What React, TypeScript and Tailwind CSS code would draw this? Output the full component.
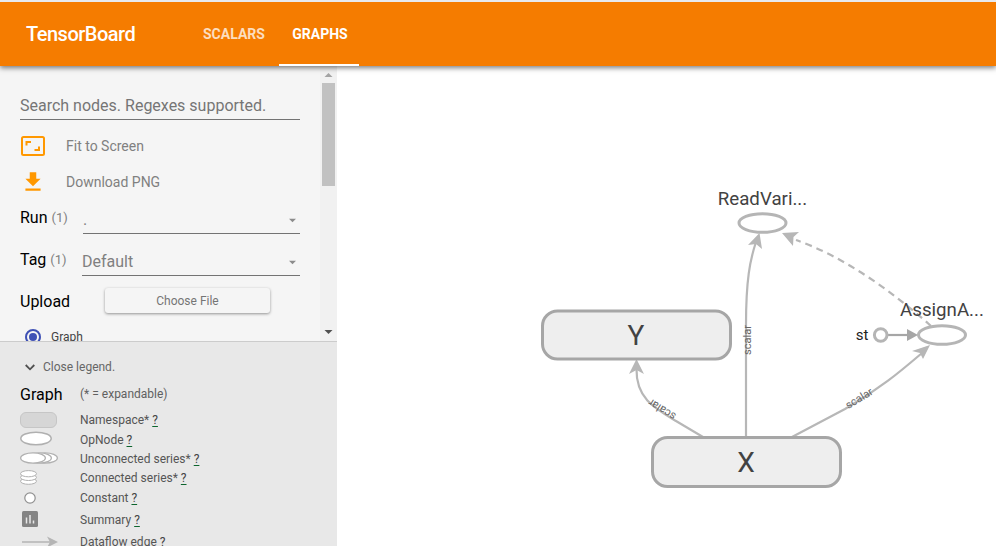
import React from "react";

function Caret() {
  return (
    <svg className="mr-1 mt-[2px] h-[5px] w-[7px]" viewBox="0 0 8 5">
      <path d="M0 0.500h8L4 4.500z" fill="#8c8c8c" />
    </svg>
  );
}

function SelectRow({ label, value, left }: { label: string; value: string; left: string }) {
  return (
    <div className="flex h-[42px] items-start pl-5">
      <div className={`${left} flex h-[35px] shrink-0 items-center text-base text-black`}>
        {label}
        <span className="ml-1 mt-px text-[13px] text-[#808080]">(1)</span>
      </div>
      <div className="flex h-[34px] flex-1 items-center justify-between border-b border-[#737373] pt-[6px] text-base text-[#808080]">
        <span>{value}</span>
        <Caret />
      </div>
    </div>
  );
}

function LegendRow({ icon, label, height }: { icon: React.ReactNode; label: string; height: string }) {
  return (
    <div className={`${height} flex shrink-0 items-center pl-5 text-xs leading-4 text-[#555]`}>
      <div className="flex w-[60px] shrink-0 items-center">{icon}</div>
      <span>
        {label} <span className="text-[#444] underline decoration-[#0d652d] decoration-1 underline-offset-2">?</span>
      </span>
    </div>
  );
}

function Header() {
  return (
    <header className="relative z-10 flex h-[66px] shrink-0 border-t-2 border-[#e8eaed] bg-[#f57c00] text-white shadow-[0_2px_5px_rgba(0,0,0,0.5)]">
      <div className="flex w-[191px] items-center pl-[26px] text-[20px] font-medium tracking-[-0.5px]">TensorBoard</div>
      <nav className="flex text-sm font-medium">
        <div className="flex w-[88px] items-center pl-3 font-bold text-white/75">SCALARS</div>
        <div className="flex w-20 items-center justify-center border-b-2 border-white pl-[2px] pt-[2px] font-bold">GRAPHS</div>
      </nav>
    </header>
  );
}

function Controls() {
  return (
    <div className="flex h-[275px] shrink-0 overflow-hidden bg-[#f5f5f5]">
      <div className="w-[300px] shrink-0 pt-[25px]">
        <div className="ml-5 flex h-[29px] items-center border-b border-[#737373] pt-[2px] text-base text-[#757575]">
          Search nodes. Regexes supported.
        </div>
        <div className="mt-2 flex h-9 items-center pl-5 text-sm text-[#808080]">
          <svg className="mr-5 h-[26px] w-[26px]" viewBox="0 0 26 26">
            <rect x="2" y="4" width="22" height="18" rx="1.5" fill="none" stroke="#ff9800" strokeWidth="2" />
            <path d="M6.500 12.500V9H11M19 13.500V17h-4.500" fill="none" stroke="#ff9800" strokeWidth="2" />
          </svg>
          Fit to Screen
        </div>
        <div className="flex h-9 items-center pl-5 text-sm text-[#808080]">
          <svg className="mr-5 h-[26px] w-[26px]" viewBox="0 0 24 24" fill="#ff9800">
            <path d="M19 9h-4V3H9v6H5l7 7 7-7zM5 18v2h14v-2H5z" />
          </svg>
          Download PNG
        </div>
        <SelectRow label="Run" value="." left="w-[63px]" />
        <SelectRow label="Tag" value="Default" left="w-[62px]" />
        <div className="flex h-[34px] items-center pl-5 text-base text-black">
          <span className="w-[85px] pt-[2px]">Upload</span>
          <button className="mt-[-1px] h-[25px] w-[165px] rounded-[3px] text-xs text-[#757575] shadow-[0_1px_3px_rgba(0,0,0,0.4)]">Choose File</button>
        </div>
        <div className="mt-[11px] flex h-4 items-center pl-[25px] text-xs text-[#444]">
          <span className="mr-[10px] flex h-4 w-4 items-center justify-center rounded-full border-2 border-[#3f51b5]">
            <span className="h-2 w-2 rounded-full bg-[#3f51b5]" />
          </span>
          Graph
        </div>
      </div>
      <div className="ml-5 flex w-[17px] flex-col items-center bg-[#f1f1f1]">
        <svg className="h-[17px] w-[17px] shrink-0" viewBox="0 0 17 17"><path d="M4.500 11l4-4 4 4z" fill="#a3a3a3" /></svg>
        <div className="h-[103px] w-[13px] bg-[#c1c1c1]" />
        <svg className="mt-auto h-[17px] w-[17px] shrink-0" viewBox="0 0 17 17"><path d="M4.500 6l4 4 4-4z" fill="#505050" /></svg>
      </div>
    </div>
  );
}

function Legend() {
  return (
    <div className="flex min-h-0 flex-1 flex-col overflow-hidden border-t border-[#ccc] bg-[#e8e8e8]">
      <div className="mt-[13px] flex h-6 shrink-0 items-center pl-[25px] text-xs text-[#666]">
        <svg className="mr-2 h-[10px] w-[10px]" viewBox="0 0 10 10"><path d="M.7 3L5 7.300 9.300 3" fill="none" stroke="#505050" strokeWidth="1.8" /></svg>
        Close legend.
      </div>
      <div className="mt-1 flex h-6 shrink-0 items-center pl-5 text-base text-black">
        <span className="w-[60px]">Graph</span>
        <span className="pb-[2px] text-xs text-[#606060]">(* = expandable)</span>
      </div>
      <LegendRow height="mt-[3px] h-5" label="Namespace*" icon={<div className="h-4 w-[37px] rounded-[6px] border-[1.5px] border-[#c6c6c6] bg-[#d6d6d6]" />} />
      <LegendRow height="h-[19px]" label="OpNode" icon={<svg className="mb-[2px] h-[15px] w-8" viewBox="0 0 32 15"><ellipse cx="16" cy="7.500" rx="15.200" ry="6.300" fill="white" stroke="#b0b0b0" strokeWidth="1.5" /></svg>} />
      <LegendRow height="h-[19px]" label="Unconnected series*" icon={
        <svg className="mb-[2px] h-3 w-[38px]" viewBox="0 0 38 12" fill="white" stroke="#b0b0b0" strokeWidth="1.2">
          <ellipse cx="25" cy="6" rx="12.400" ry="5.200" /><ellipse cx="19" cy="6" rx="12.400" ry="5.200" /><ellipse cx="13" cy="6" rx="12.400" ry="5.200" />
        </svg>
      } />
      <LegendRow height="h-[19px]" label="Connected series*" icon={
        <svg className="mb-px h-[15px] w-[17px]" viewBox="0 0 17 15" fill="white" stroke="#b0b0b0" strokeWidth="1">
          <ellipse cx="8.500" cy="11.200" rx="8" ry="3.100" /><ellipse cx="8.500" cy="7.400" rx="8" ry="3.100" /><ellipse cx="8.500" cy="3.700" rx="8" ry="3.100" />
        </svg>
      } />
      <LegendRow height="h-[21px]" label="Constant" icon={<svg className="ml-1 h-3 w-3" viewBox="0 0 12 12"><circle cx="6" cy="6" r="5.200" fill="white" stroke="#909090" strokeWidth="1.200" /></svg>} />
      <LegendRow height="h-[23px]" label="Summary" icon={
        <svg className="mb-[2px] ml-[2px] h-4 w-4" viewBox="0 0 16 16"><rect width="16" height="16" rx="1.500" fill="#848484" /><path d="M4.500 6.500v6M8 4v8.500M11.500 9.500v3" stroke="#e8e8e8" strokeWidth="1.500" /></svg>
      } />
      <LegendRow height="h-[21px]" label="Dataflow edge" icon={<svg className="ml-[2px] h-3 w-9" viewBox="0 0 36 12"><path d="M0 6h30" stroke="#b5b5b5" strokeWidth="1.500" /><path d="M25 .5L36 6l-11 5.500L28 6z" fill="#b5b5b5" /></svg>} />
    </div>
  );
}

function Graph() {
  return (
    <svg className="h-[480px] w-[659px] shrink-0" viewBox="337 66 659 480">
      <g fill="none" stroke="#b7b7b7" strokeWidth="2.200">
        <path d="M703 437L676 421C654 408 636 398 636.500 369" />
        <path d="M746 437V325C746 280 750 260 756 242" />
        <path d="M792 437L845 409C880 389 902 370 922 353" />
        <path d="M931 326C894 293 845 257 796 240" strokeDasharray="7 5" />
        <path d="M888 335h22" stroke="#a6a6a6" />
      </g>
      <g fill="#b7b7b7">
        <path d="M636.500 359l7.500 15-7.500-4-7.500 4z" />
        <path d="M759.500 233l2.500 16-6-5-8 1z" />
        <path d="M782 233l17-1-5.500 5-.5 9z" />
        <path d="M930 345l-7 14-3-6-8-2z" />
        <path d="M907 329l11 6-11 6z" fill="#a6a6a6" />
      </g>
      <g fill="#eee" stroke="#a6a6a6" strokeWidth="3">
        <rect x="542.500" y="311" width="188" height="48" rx="15" />
        <rect x="652.500" y="437.500" width="188" height="49" rx="15" />
      </g>
      <g fill="white" stroke="#b5b5b5" strokeWidth="3">
        <ellipse cx="762.500" cy="223" rx="23.500" ry="9.300" />
        <ellipse cx="942" cy="335" rx="23.500" ry="9.300" />
        <circle cx="880.700" cy="335" r="6.300" />
      </g>
      <g fill="#424242" textAnchor="middle" fontFamily="Roboto, sans-serif">
        <text x="636" y="345" fontSize="28">Y</text>
        <text x="746" y="472" fontSize="28">X</text>
        <text x="762.500" y="205" fontSize="18.700">ReadVari...</text>
        <text x="942" y="316" fontSize="18.700">AssignA...</text>
        <text x="862" y="339.500" fontSize="15" fill="#222">st</text>
      </g>
      <g fill="#666" textAnchor="middle" fontSize="11" fontFamily="Roboto, sans-serif">
        <text transform="translate(750.500 340) rotate(-90)">scalar</text>
        <text transform="translate(664 406.500) rotate(212)">scalar</text>
        <text transform="translate(861 401.500) rotate(-31)">scalar</text>
      </g>
    </svg>
  );
}

export default function App() {
  return (
    <div className="flex h-[546px] w-[996px] flex-col overflow-hidden bg-white font-[Roboto,sans-serif]">
      <Header />
      <main className="flex min-h-0 flex-1">
        <aside className="flex w-[337px] shrink-0 flex-col">
          <Controls />
          <Legend />
        </aside>
        <Graph />
      </main>
    </div>
  );
}
